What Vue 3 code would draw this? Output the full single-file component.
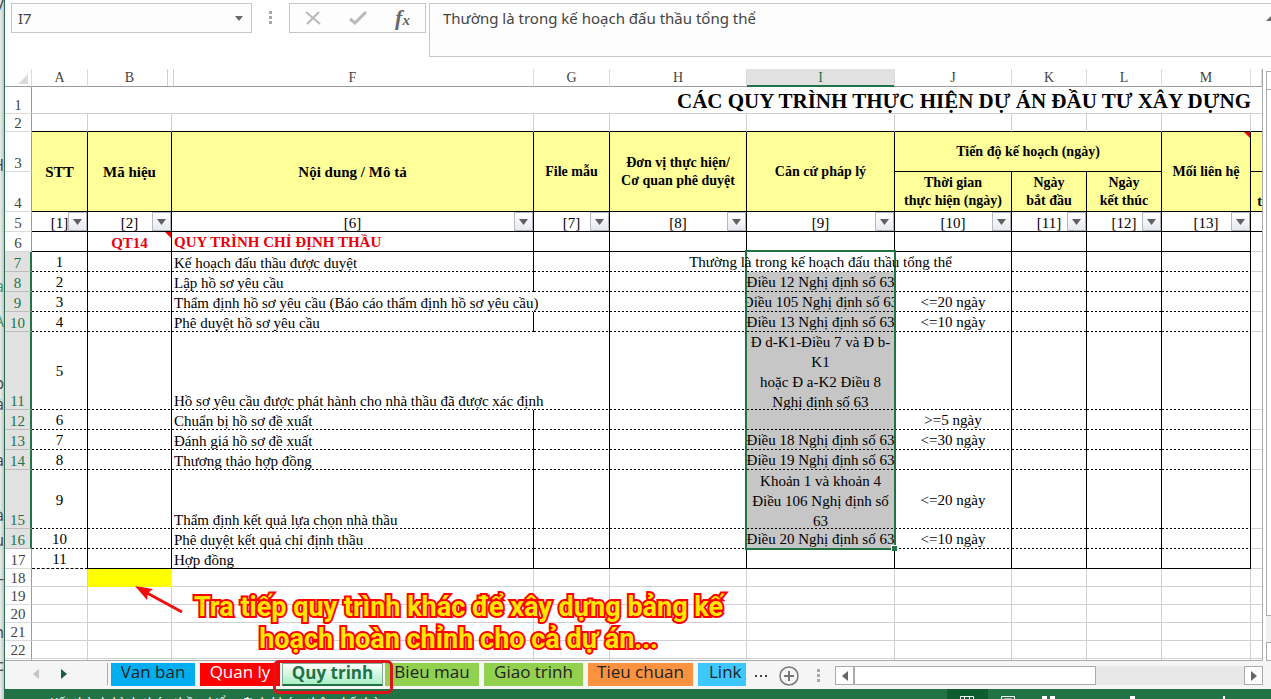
<script setup>
import { ref } from 'vue'

const cellRef = ref('I7')
const formula = ref('Thường là trong kế hoạch đấu thầu tổng thể')

const columns = [
  { id: 'A' }, { id: 'B' }, { id: 'F' }, { id: 'G' }, { id: 'H' }, { id: 'I' },
  { id: 'J' }, { id: 'K' }, { id: 'L' }, { id: 'M' }, { id: 'N' },
]

const filters = ['[1]', '[2]', '[6]', '[7]', '[8]', '[9]', '[10]', '[11]', '[12]', '[13]']

const steps = [
  { row: 7, no: 1, name: 'Kế hoạch đấu thầu được duyệt', law: ['Thường là trong kế hoạch đấu thầu tổng thể'], active: true },
  { row: 8, no: 2, name: 'Lập hồ sơ yêu cầu', law: ['Điều 12 Nghị định số 63'] },
  { row: 9, no: 3, name: 'Thẩm định hồ sơ yêu cầu (Báo cáo thẩm định hồ sơ yêu cầu)', spill: true, law: ['Điều 105 Nghị định số 63'], time: '<=20 ngày' },
  { row: 10, no: 4, name: 'Phê duyệt hồ sơ yêu cầu', law: ['Điều 13 Nghị định số 63'], time: '<=10 ngày' },
  { row: 11, no: 5, name: 'Hồ sơ yêu cầu được phát hành cho nhà thầu đã được xác định', spill: true, size: 'tall', law: ['Đ d-K1-Điều 7 và Đ b-', 'K1', 'hoặc Đ a-K2 Điều 8', 'Nghị định số 63'] },
  { row: 12, no: 6, name: 'Chuẩn bị hồ sơ đề xuất', law: [], time: '>=5 ngày' },
  { row: 13, no: 7, name: 'Đánh giá hồ sơ đề xuất', law: ['Điều 18 Nghị định số 63'], time: '<=30 ngày' },
  { row: 14, no: 8, name: 'Thương thảo hợp đồng', law: ['Điều 19 Nghị định số 63'] },
  { row: 15, no: 9, name: 'Thẩm định kết quả lựa chọn nhà thầu', size: 'mid', law: ['Khoản 1 và khoản 4', 'Điều 106 Nghị định số', '63'], time: '<=20 ngày' },
  { row: 16, no: 10, name: 'Phê duyệt kết quả chỉ định thầu', law: ['Điều 20 Nghị định số 63'], time: '<=10 ngày' },
  { row: 17, no: 11, name: 'Hợp đồng', law: [], last: true },
]

const emptyRows = [18, 19, 20, 21, 22, 23]

const tabs = [
  { name: 'Van ban', cls: 'blue' },
  { name: 'Quan ly', cls: 'red' },
  { name: 'Quy trinh', cls: 'current' },
  { name: 'Bieu mau', cls: 'green' },
  { name: 'Giao trinh', cls: 'green' },
  { name: 'Tieu chuan', cls: 'orange' },
  { name: 'Link ban', cls: 'cyan' },
]
</script>

<template>
  <div class="desktop">
    <div class="behind" aria-hidden="true">
      <span class="bit b1">y</span>
      <span class="bit b2">H</span>
      <span class="bit b3 g">a</span>
      <span class="bit b4 g">A</span>
      <span class="bit b5">ap</span>
      <span class="bit b6">là</span>
      <span class="bit b7">a</span>
      <span class="bit b8">là</span>
      <span class="bit b9">ụ</span>
      <span class="bit b10">–</span>
      <span class="bit b11">n</span>
      <span class="bit b12">c</span>
    </div>
    <main class="app">
      <div class="formula-row">
        <div class="name-box">
          <input v-model="cellRef" aria-label="Name box" />
          <button aria-label="Name list">
            <svg width="8" height="5" viewBox="0 0 8 5"><path d="M0 0h8L4 5z" fill="#6a6a6a" /></svg>
          </button>
        </div>
        <span class="dots"><i></i><i></i><i></i></span>
        <div class="fx-box">
          <button aria-label="Cancel">
            <svg width="16" height="14" viewBox="0 0 16 14"><path d="M1 1l14 12M14 1L2 13" stroke="#b9b9b9" stroke-width="2" fill="none" /></svg>
          </button>
          <button aria-label="Enter">
            <svg width="18" height="14" viewBox="0 0 18 14"><path d="M1 8l5 4L17 1" stroke="#b9b9b9" stroke-width="3" fill="none" /></svg>
          </button>
          <button aria-label="Insert function" class="fx"><span>f</span><sub>x</sub></button>
        </div>
        <div class="formula">
          <textarea v-model="formula" aria-label="Formula bar"></textarea>
          <svg width="10" height="7" viewBox="0 0 10 7"><path d="M0 6l5-5 5 5z" fill="#6a6a6a" /></svg>
        </div>
      </div>

      <div class="sheet-row">
        <div class="grid">
          <table>
            <colgroup>
              <col class="c-head" />
              <col v-for="c in columns" :key="c.id" :class="'c-' + c.id" />
            </colgroup>
            <thead>
              <tr class="letters">
                <th class="corner"><svg width="10" height="10" viewBox="0 0 10 10"><path d="M10 0v10H0z" fill="#dcdcdc" /></svg></th>
                <th v-for="c in columns" :key="c.id" scope="col" :class="{ hot: c.id === 'I', folded: c.id === 'B' }">
                  <template v-if="c.id !== 'N'">{{ c.id }}</template>
                </th>
              </tr>
            </thead>
            <tbody>
              <tr class="r-title">
                <th scope="row">1</th>
                <td colspan="10" class="title">CÁC QUY TRÌNH THỰC HIỆN DỰ ÁN ĐẦU TƯ XÂY DỰNG</td>
                <td></td>
              </tr>
              <tr class="r-small above">
                <th scope="row">2</th>
                <td v-for="c in columns" :key="c.id"></td>
              </tr>
              <tr class="r-head">
                <th scope="row">3</th>
                <td rowspan="2" class="h big">STT</td>
                <td rowspan="2" class="h big">Mã hiệu</td>
                <td rowspan="2" class="h big">Nội dung / Mô tả</td>
                <td rowspan="2" class="h">File mẫu</td>
                <td rowspan="2" class="h">Đơn vị thực hiện/<br />Cơ quan phê duyệt</td>
                <td rowspan="2" class="h">Căn cứ pháp lý</td>
                <td colspan="3" class="h">Tiến độ kế hoạch (ngày)</td>
                <td rowspan="2" class="h noted">Mối liên hệ</td>
                <td class="h edge"></td>
              </tr>
              <tr class="r-head">
                <th scope="row">4</th>
                <td class="h">Thời gian<br />thực hiện (ngày)</td>
                <td class="h">Ngày<br />bắt đầu</td>
                <td class="h">Ngày<br />kết thúc</td>
                <td class="h edge low">t</td>
              </tr>
              <tr class="box">
                <th scope="row">5</th>
                <td v-for="f in filters" :key="f" class="filter">
                  <div class="in center sunk">{{ f }}</div>
                  <button :aria-label="'Filter ' + f">
                    <svg width="9" height="6" viewBox="0 0 9 6"><path d="M0 0h9L4.500 6z" fill="#606060" /></svg>
                  </button>
                </td>
                <td class="edge"></td>
              </tr>
              <tr class="box">
                <th scope="row">6</th>
                <td></td>
                <td class="noted"><div class="in center code sunk">QT14</div></td>
                <td><div class="in code">QUY TRÌNH CHỈ ĐỊNH THẦU</div></td>
                <td v-for="n in 7" :key="n"></td>
                <td class="plain"></td>
              </tr>
              <tr v-for="s in steps" :key="s.row" :class="['box', 'step', s.size, { last: s.last }]">
                <th scope="row" :class="{ hot: !s.last }">{{ s.row }}</th>
                <td class="first"><div class="in center">{{ s.no }}</div></td>
                <td></td>
                <td :class="{ open: s.spill }"><div class="in bottom">{{ s.name }}</div></td>
                <td></td>
                <td></td>
                <td :class="['law', { shade: !s.last && !s.active, active: s.active }]">
                  <div class="in multi"><span v-for="l in s.law" :key="l">{{ l }}</span></div>
                  <span v-if="s.active" class="selection"><i></i></span>
                </td>
                <td><div class="in center">{{ s.time }}</div></td>
                <td></td>
                <td></td>
                <td></td>
                <td class="plain"></td>
              </tr>
              <tr v-for="r in emptyRows" :key="r" class="r-small">
                <th scope="row">{{ r < 23 ? r : '' }}</th>
                <td v-for="c in columns" :key="c.id" :class="{ mark: r === 18 && c.id === 'B' }"></td>
              </tr>
            </tbody>
          </table>
        </div>
        <div class="vscroll"><i class="up"></i><i class="thumb"></i><i class="track"></i><i class="down"></i></div>
      </div>

      <div class="tab-row">
        <nav class="arrows">
          <button aria-label="Previous sheet"><svg width="6" height="10" viewBox="0 0 6 10"><path d="M6 0v10L0 5z" fill="#c3c3c3" /></svg></button>
          <button aria-label="Next sheet"><svg width="6" height="10" viewBox="0 0 6 10"><path d="M0 0v10l6-5z" fill="#1b5e3b" /></svg></button>
        </nav>
        <div class="tabs">
          <button v-for="t in tabs" :key="t.name" :class="['tab', t.cls]">{{ t.name }}</button>
        </div>
        <button class="more" aria-label="More sheets"><i></i><i></i><i></i></button>
        <button class="add" aria-label="New sheet">
          <svg width="20" height="20" viewBox="0 0 20 20"><circle cx="10" cy="10" r="9" fill="none" stroke="#767676" stroke-width="1.500" /><path d="M10 5v10M5 10h10" stroke="#767676" stroke-width="2" /></svg>
        </button>
        <span class="dots"><i></i><i></i><i></i></span>
        <div class="hscroll">
          <button aria-label="Scroll left"><svg width="6" height="10" viewBox="0 0 6 10"><path d="M6 0v10L0 5z" fill="#666" /></svg></button>
          <i class="thumb"></i>
          <i class="track"></i>
          <button aria-label="Scroll right"><svg width="6" height="10" viewBox="0 0 6 10"><path d="M0 0v10l6-5z" fill="#666" /></svg></button>
        </div>
      </div>

      <footer class="status">
        <span class="msg">Kết thành hình thức thầu, kiểm định khác, thêm kế thừa</span>
        <span class="view on"><svg width="14" height="10" viewBox="0 0 14 10"><path d="M.5.5h13v9H.5zM4.500 0v10M9.500 0v10M0 5h14" fill="none" stroke="#fff" /></svg></span>
        <span class="view"><svg width="14" height="10" viewBox="0 0 14 10"><path d="M.5.5h13v9H.5zM3 3h8v6" fill="none" stroke="#fff" /></svg></span>
        <span class="view"><svg width="14" height="10" viewBox="0 0 14 10"><path d="M0 0h5v5H0zM8 0h5v5H8z" fill="#fff" /></svg></span>
        <span class="zoom"><i></i><b></b></span>
      </footer>
    </main>

    <div class="callout">Tra tiếp quy trình khác để xây dựng bảng kế<br />hoạch hoàn chỉnh cho cả dự án...</div>
    <svg class="arrow" width="52" height="32" viewBox="0 0 52 32">
      <path d="M49 28L14 9" stroke="#f00e0e" stroke-width="3" fill="none" />
      <path d="M2 2l18 3-5 4-1 7z" fill="#f00e0e" />
    </svg>
    <span class="ring"></span>
  </div>
</template>

<style>
html, body, #app { height: 100%; margin: 0; }
body { overflow: hidden; background: #fff; }
</style>

<style scoped>
* { box-sizing: border-box; }
button { border: 0; padding: 0; margin: 0; background: none; font: inherit; color: inherit; display: flex; align-items: center; justify-content: center; }
svg { display: block; flex: none; }

.desktop { position: relative; display: flex; height: 100vh; overflow: hidden; font-family: "Liberation Serif", "Times New Roman", serif; }
.behind { position: relative; flex: none; width: 5px; overflow: hidden; background: linear-gradient(90deg, #e9eeec, #bfc8c4); border-right: 1px solid #2a6b4d; font: 16px "Open Sans", sans-serif; color: #444; }
.bit { position: absolute; right: 0; line-height: 20px; }
.g { color: #3f8f68; }
.b1 { top: -8px; } .b2 { top: 155px; } .b3 { top: 276px; } .b4 { top: 311px; }
.b5 { top: 373px; } .b6 { top: 394px; } .b7 { top: 450px; } .b8 { top: 505px; }
.b9 { top: 530px; } .b10 { top: 568px; } .b11 { top: 622px; } .b12 { top: 655px; }

.app { flex: 1; min-width: 0; display: flex; flex-direction: column; background: #fff; }

.formula-row { display: flex; align-items: flex-start; height: 69px; padding: 3px 0 0 6px; font-family: "Noto Sans", "Open Sans", sans-serif; font-size: 15px; color: #444; }
.name-box { display: flex; width: 241px; height: 30px; border: 1px solid #c6c6c6; background: #fdfdfd; }
.name-box input { flex: 1; min-width: 0; border: 0; padding: 0 6px; background: none; font: inherit; color: inherit; outline: 0; }
.name-box button { width: 24px; }
.dots { display: flex; flex-direction: column; gap: 2px; }
.dots i { width: 3px; height: 3px; background: #a8a8a8; }
.formula-row .dots { margin: 8px 17px 0 17px; }
.fx-box { display: flex; width: 137px; height: 30px; border: 1px solid #c6c6c6; background: #fdfdfd; }
.fx-box button { flex: 1; }
.fx-box .fx { font: italic bold 22px "Liberation Serif", serif; color: #666; }
.fx sub { font-size: 15px; vertical-align: baseline; padding-top: 4px; }
.formula { flex: 1; display: flex; height: 54px; margin-left: 3px; overflow: hidden; border: 1px solid #c6c6c6; border-right: 0; background: #fdfdfd; }
.formula textarea { flex: 1; border: 0; padding: 3px 13px; background: none; font: inherit; line-height: 22px; color: inherit; resize: none; outline: 0; }
.formula svg { margin: 11px -5px 0 0; }

.sheet-row { flex: 1; min-height: 0; display: flex; gap: 3px; background: #fff; }
.grid { flex: 1; min-width: 0; overflow: hidden; border-right: 1px solid #ababab; border-bottom: 1px solid #ababab; }
table { width: 100%; table-layout: fixed; border-collapse: separate; border-spacing: 0; font-size: 15px; color: #000; }
.c-head { width: 27px; } .c-A { width: 56px; } .c-B { width: 84px; } .c-F { width: 362px; }
.c-G { width: 76px; } .c-H { width: 137px; } .c-I { width: 148px; } .c-J { width: 117px; }
.c-K { width: 75px; } .c-L { width: 75px; } .c-M { width: 89px; }

th { font-weight: 400; color: #444; padding: 0; line-height: 16px; }
tbody th { vertical-align: bottom; border-right: 1px solid #9a9a9a; border-bottom: 1px solid #dadada; text-align: center; }
tbody th.hot { background: #e1e1e1; color: #217346; border-right: 2px solid #217346; border-bottom-color: #bdbdbd; }
.letters th { position: relative; height: 18px; padding-top: 1px; border-right: 1px solid #dadada; border-bottom: 1px solid #9a9a9a; font-size: 14px; }
.letters th.folded { border-right-color: transparent; }
.letters th.folded::after { content: ""; position: absolute; z-index: 1; top: 0; bottom: 0; right: -3px; width: 5px; border: solid #d0d0d0; border-width: 0 1px; }
.letters th.hot { background: #e1e1e1; color: #217346; border-bottom-color: #217346; box-shadow: inset 0 -1px #217346; }
.corner svg { margin: 2px 3px 0 auto; }

td { position: relative; padding: 0; border-right: 1px solid #d0d0d0; border-bottom: 1px solid #d0d0d0; white-space: nowrap; }
td:last-child { border-right: 0; }
.r-title { height: 27px; }
.r-small { height: 18px; }
.above td { border-bottom-color: #000; }
.r-title td.title { border-right: 0; padding-top: 2px; text-align: right; font-size: 21px; font-weight: 700; line-height: 24px; }
.r-head { height: 40px; }
.h { background: #ffff99; border-color: #000; text-align: center; font-weight: 700; font-size: 14px; line-height: 18px; }
.h.big { padding-top: 1px; font-size: 15px; }
.h.low { vertical-align: bottom; text-align: right; }
.noted::after { content: ""; position: absolute; top: 0; right: 0; border: 3px solid; border-color: #e00 #e00 transparent transparent; }

.box { height: 20px; }
.tall { height: 78px; }
.mid { height: 59px; }
.box td { border-color: #000; }
.box td.plain { border-bottom-color: #d0d0d0; }
.box.step td { border-bottom: 0; padding-bottom: 1px; background: repeating-linear-gradient(90deg, #000 0 2px, transparent 2px 4px) left bottom / 100% 1px no-repeat; }
.box.last td { border-bottom: 1px solid #000; padding-bottom: 0; background: none; }
.box.last td.first { border-bottom: 1px dashed #000; }
.box.step td.plain { border-bottom: 1px solid #d0d0d0; padding-bottom: 0; background: none; }
.box.step td.shade { background-color: #c6c6c6; }
.box td.open { border-right-color: transparent; }
.box td.open .in { position: relative; z-index: 2; }
.in { display: flex; align-items: center; height: 19px; padding: 2px 0 0 2px; line-height: 17px; }
.in.bottom { align-items: flex-end; line-height: 15px; }
.in.center { justify-content: center; padding-left: 0; }
.in.sunk { padding-top: 4px; line-height: 15px; }
.tall .in { height: 77px; }
.mid .in { height: 58px; }
.in.multi { flex-direction: column; justify-content: center; padding: 0; overflow: hidden; }
.multi span { flex: none; line-height: 20px; }
.tall .in.multi, .mid .in.multi { justify-content: flex-start; }
.mid .in.multi { padding-top: 1px; }
.active .in.multi { position: relative; z-index: 2; overflow: visible; }
.code { font-weight: 700; color: #e8000d; }
.selection { position: absolute; z-index: 1; top: -2px; left: -2px; right: -2px; height: 300px; border: 2px solid #217346; }
.selection i { position: absolute; right: -3px; bottom: -3px; width: 6px; height: 6px; background: #217346; border: solid #fff; border-width: 1px 0 0 1px; }
.filter button { position: absolute; top: 0; right: 0; width: 19px; height: 19px; border: 1px solid #b4b8c0; background: linear-gradient(#fff, #e6e9ef); }
td.mark { background: #ff0; border-color: #ff0; }

.vscroll { flex: none; width: 5px; margin-top: 2px; display: flex; flex-direction: column; background: #f0f0f0; }
.vscroll i { border-left: 1px solid #ababab; background: #fff; }
.vscroll .up { height: 19px; border-top: 1px solid #ababab; border-bottom: 1px solid #ababab; }
.vscroll .thumb { flex: 1; border-bottom: 1px solid #ababab; }
.vscroll .track { height: 26px; background: #f0f0f0; border: 0; }
.vscroll .down { height: 19px; border-top: 1px solid #ababab; border-bottom: 1px solid #ababab; }

.tab-row { flex: none; display: flex; align-items: flex-start; height: 28px; padding: 2px 8px 0 0; background: #f5f5f5; font: 17px/18px "Open Sans", "Noto Sans", sans-serif; color: #222; }
.arrows { display: flex; width: 103px; height: 22px; border-right: 1px solid #ababab; padding-left: 28px; gap: 22px; }
.tabs { display: flex; width: 638px; height: 23px; padding-left: 3px; overflow: hidden; }
.tab { flex: none; align-items: flex-start; height: 23px; }
.tab.blue { width: 84px; margin-right: 5px; background: #00adef; }
.tab.red { width: 80px; margin-right: 2px; background: #f00; color: #fff; }
.tab.current { width: 101px; margin-right: 2px; border: 1px solid #8aa898; border-bottom: 2px solid #217346; background: linear-gradient(#fff, #a9efc4); color: #217346; font-weight: 700; }
.tab.green { width: 94px; margin-right: 5px; background: #92d050; }
.tab.green + .green { width: 99px; }
.tab.orange { width: 105px; margin-right: 5px; background: #fb9240; }
.tab.cyan { background: #3cc8ff; padding-left: 11px; }
.more { gap: 3px; width: 30px; height: 26px; }
.more i { width: 2px; height: 2px; background: #444; }
.add { width: 26px; height: 26px; }
.tab-row .dots { margin: 6px 15px 0 15px; }
.hscroll { flex: 1; display: flex; height: 19px; margin-top: 3px; background: #e8e8e8; }
.hscroll button { width: 19px; border: 1px solid #ababab; background: #fff; }
.hscroll .thumb { flex: 242; border: 1px solid #ababab; background: #fff; }
.hscroll .track { flex: 149; }

.status { flex: none; display: flex; height: 10px; overflow: hidden; background: #217346; color: #fff; font: 13px/16px "Open Sans", sans-serif; }
.msg { flex: 1; padding: 5px 0 0 45px; white-space: nowrap; }
.view { width: 41px; padding: 7px 0 0 13px; }
.view.on { background: #0e5c2f; }
.zoom { display: flex; gap: 88px; width: 201px; padding: 7px 0 0 60px; }
.zoom i { width: 5px; height: 4px; background: #fff; }
.zoom b { width: 2px; height: 4px; background: #fff; }

.callout { position: absolute; top: 591px; left: 191px; width: 535px; text-align: center; white-space: nowrap; font: 700 27px/32px Roboto, sans-serif; color: #ffe600; -webkit-text-stroke: 4px #f00; paint-order: stroke fill; }
.arrow { position: absolute; top: 584px; left: 133px; }
.ring { position: absolute; top: 660px; left: 273px; width: 120px; height: 34px; border: 3px solid #e0131a; border-radius: 6px; }
</style>
